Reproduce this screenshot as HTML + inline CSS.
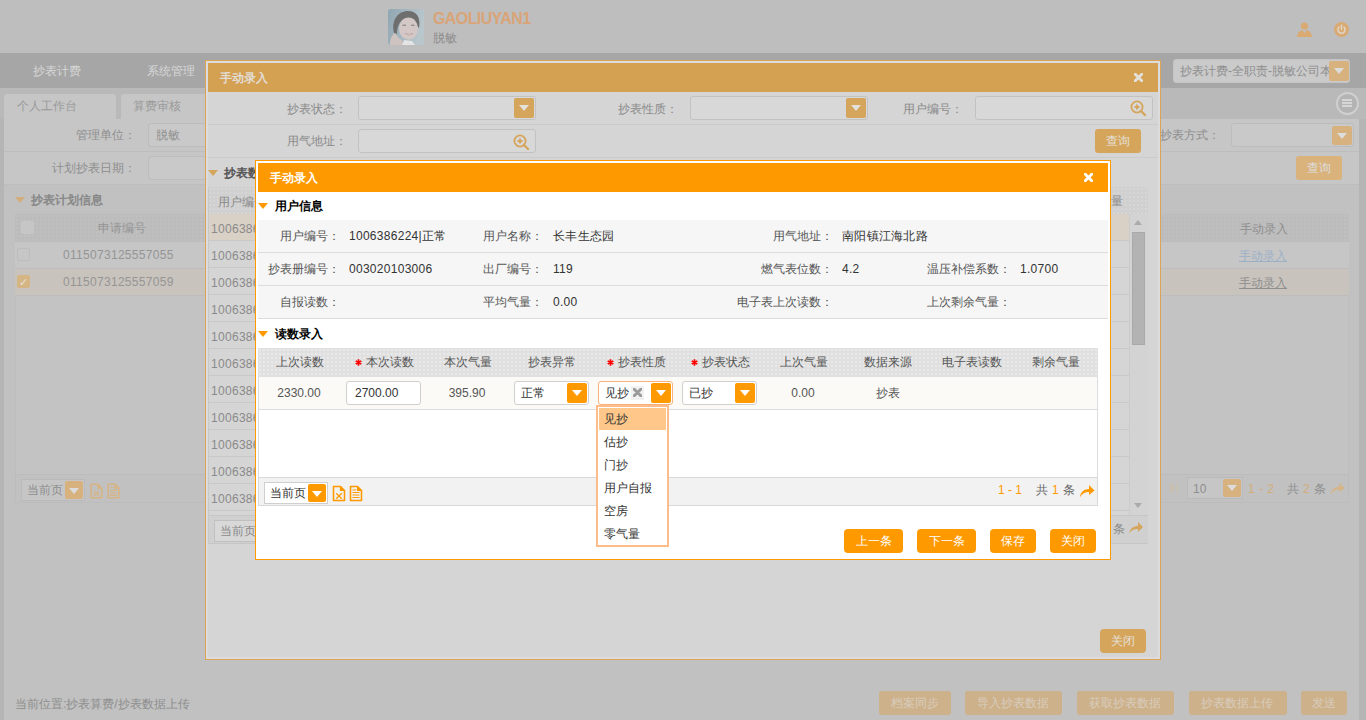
<!DOCTYPE html>
<html><head><meta charset="utf-8">
<style>
*{box-sizing:border-box;margin:0;padding:0}
html,body{width:1366px;height:720px;overflow:hidden}
body{position:relative;background:#bdbdbd;font-family:"Liberation Sans",sans-serif;font-size:12px;line-height:12px;color:#333}
.a{position:absolute}
.t{position:absolute;white-space:nowrap;font-size:12px;line-height:12px}
.r{text-align:right}
.b{font-weight:bold}
.tri{position:absolute;width:0;height:0;border-left:5px solid transparent;border-right:5px solid transparent;border-top:6px solid #fff}
/* page (dimmed) */
#hdr{left:0;top:0;width:1366px;height:53px;background:#bebebe}
#nav{left:0;top:53px;width:1366px;height:35px;background:#a6a6a6}
#tabs{left:0;top:88px;width:1366px;height:31px;background:#b9b9b9}
.ptxt{color:#8e8e8e}
.dots1{background-color:#bcbcbc;background-image:radial-gradient(#c1c1c1 0.7px,transparent 0.8px);background-size:4px 4px}
.dots2{background-color:#e0e0e0;background-image:radial-gradient(#eaeaea 0.7px,transparent 0.8px);background-size:4px 4px}
.dots0{background-color:#d0d0d0;background-image:radial-gradient(#d6d6d6 0.7px,transparent 0.8px);background-size:4px 4px}
</style></head>
<body>
<!-- ================= PAGE ================= -->
<div class="a" id="hdr"></div>
<!-- avatar -->
<svg class="a" style="left:388px;top:9px" width="36" height="36" viewBox="0 0 36 36">
 <defs><clipPath id="cp"><rect x="0" y="0" width="36" height="36" rx="3"/></clipPath>
 <linearGradient id="bgg" x1="0" y1="0" x2="1" y2="0.3"><stop offset="0" stop-color="#8fa6b2"/><stop offset="1" stop-color="#b9c6cc"/></linearGradient></defs>
 <g clip-path="url(#cp)">
 <rect width="36" height="36" fill="url(#bgg)"/>
 <path d="M6 24 C3 11 10 2 20 2 C29 2 33 9 31 19 L29 17 C26 11 21 9 15 11 C11 13 9 18 9 25 Z" fill="#6f6e6e"/>
 <ellipse cx="20.5" cy="19.5" rx="9.5" ry="11" fill="#d3c8c5"/>
 <path d="M14.5 16.5 Q16.5 15.5 18 16.5" stroke="#777" stroke-width="1" fill="none"/>
 <path d="M23 16.5 Q24.5 15.5 26.5 16.5" stroke="#777" stroke-width="1" fill="none"/>
 <path d="M17 24.5 Q21 27.5 25 24.5 Q21 26 17 24.5Z" fill="#eee" stroke="#b99" stroke-width="0.6"/>
 <path d="M2 36 C2 30 4 26 7 24 C9 27 11 30 14 31 L15 36 Z" fill="#cfc3c0"/>
 <path d="M14 36 L16 31 L24 32 L27 36 Z" fill="#e4e4e4"/>
 </g>
</svg>
<div class="t b" style="left:433px;top:11px;font-size:16px;line-height:16px;color:#d9a478;letter-spacing:-0.6px">GAOLIUYAN1</div>
<div class="t" style="left:433px;top:32px;color:#8a8a8a">脱敏</div>
<!-- user icon -->
<svg class="a" style="left:1297px;top:22px" width="15" height="15" viewBox="0 0 15 15">
 <circle cx="7.5" cy="4" r="3.6" fill="#d9aa72"/>
 <path d="M0 15 C0.5 10 3 8.5 5.5 8.2 L7.5 11 L9.5 8.2 C12 8.5 14.5 10 15 15 Z" fill="#d9aa72"/>
</svg>
<!-- power icon -->
<svg class="a" style="left:1334px;top:22px" width="15" height="15" viewBox="0 0 15 15">
 <circle cx="7.5" cy="7.5" r="7.5" fill="#d9aa72"/>
 <path d="M5 5 A3.6 3.6 0 1 0 10 5" stroke="#e0d6c8" stroke-width="1.5" fill="none" stroke-linecap="round"/>
 <line x1="7.5" y1="3.2" x2="7.5" y2="7.5" stroke="#e0d6c8" stroke-width="1.5" stroke-linecap="round"/>
</svg>

<div class="a" id="nav"></div>
<div class="t" style="left:33px;top:65px;color:#d6d6d6">抄表计费</div>
<div class="t" style="left:147px;top:65px;color:#d6d6d6">系统管理</div>
<!-- role select -->
<div class="a" style="left:1173px;top:59px;width:177px;height:24px;background:#cacaca;border:1px solid #c4c4c4;border-radius:3px"></div>
<div class="t" style="left:1180px;top:65px;color:#8e8e8e;width:149px;overflow:hidden">抄表计费-全职责-脱敏公司本部</div>
<div class="a" style="left:1329px;top:61px;width:20px;height:20px;background:#d7b27e;border-radius:2px"></div>
<div class="tri" style="left:1334px;top:68px;border-top-color:#dcdcdc"></div>

<div class="a" id="tabs"></div>
<div class="a" style="left:4px;top:94px;width:112px;height:25px;background:#c6c6c6;border-radius:3px 3px 0 0"></div>
<div class="t" style="left:17px;top:100px;color:#9a9a9a">个人工作台</div>
<div class="a" style="left:121px;top:94px;width:120px;height:25px;background:#c6c6c6;border-radius:3px 3px 0 0"></div>
<div class="t" style="left:133px;top:100px;color:#9a9a9a">算费审核</div>
<!-- menu circle -->
<div class="a" style="left:1336px;top:92px;width:23px;height:23px;border-radius:50%;border:2px solid #cfcfcf;background:#b4b4b4"></div>
<div class="a" style="left:1342px;top:99px;width:10px;height:2px;background:#d6d6d6;box-shadow:0 3px 0 #d6d6d6,0 6px 0 #d6d6d6"></div>

<!-- left & right strips -->
<div class="a" style="left:0;top:119px;width:4px;height:601px;background:#b5b5b5"></div>
<div class="a" style="left:1359px;top:119px;width:7px;height:601px;background:#b5b5b5"></div>
<!-- form panel -->
<div class="a" style="left:4px;top:119px;width:1355px;height:601px;background:#c1c1c1"></div>
<div class="a" style="left:4px;top:119px;width:1355px;height:65px;background:#c6c6c6"></div>
<div class="a" style="left:4px;top:151px;width:1355px;height:1px;background:#bdbdbd"></div>
<div class="a" style="left:4px;top:184px;width:1355px;height:1px;background:#bdbdbd"></div>
<div class="t r" style="left:24px;width:112px;top:129px;color:#8e8e8e">管理单位：</div>
<div class="a" style="left:148px;top:123px;width:120px;height:24px;background:#c9c9c9;border:1px solid #bcbcbc;border-radius:3px"></div>
<div class="t" style="left:156px;top:129px;color:#8e8e8e">脱敏</div>
<div class="t r" style="left:24px;width:112px;top:162px;color:#8e8e8e">计划抄表日期：</div>
<div class="a" style="left:148px;top:156px;width:120px;height:24px;background:#c9c9c9;border:1px solid #bcbcbc;border-radius:3px"></div>
<div class="t r" style="left:1104px;width:116px;top:129px;color:#8e8e8e">抄表方式：</div>
<div class="a" style="left:1231px;top:123px;width:123px;height:24px;background:#c9c9c9;border:1px solid #bcbcbc;border-radius:3px"></div>
<div class="a" style="left:1332px;top:126px;width:20px;height:19px;background:#d7b27e;border-radius:2px"></div>
<div class="tri" style="left:1337px;top:133px;border-top-color:#dcdcdc"></div>
<div class="a" style="left:1296px;top:156px;width:46px;height:24px;background:#d9b27c;border-radius:3px"></div>
<div class="t" style="left:1307px;top:162px;color:#dedede">查询</div>

<!-- plan info -->
<div class="tri" style="left:15px;top:197px;border-top-color:#d3ad7a"></div>
<div class="t b" style="left:31px;top:194px;color:#888">抄表计划信息</div>
<div class="a" style="left:15px;top:214px;width:1334px;height:288px;border:1px solid #bebebe;background:#c3c3c3"></div>
<div class="a dots1" style="left:15px;top:214px;width:1334px;height:28px"></div>
<div class="a" style="left:15px;top:242px;width:1334px;height:27px;background:#c6c6c6;border-bottom:1px solid #bdbdbd"></div>
<div class="a" style="left:15px;top:269px;width:1334px;height:27px;background:#c9c3bd;border-bottom:1px solid #bdbdbd"></div>
<div class="a" style="left:21px;top:221px;width:13px;height:13px;border:1px solid #c8c8c8;border-radius:2px;background:#c6c6c6"></div>
<div class="t" style="left:98px;top:222px;color:#959595">申请编号</div>
<div class="a" style="left:17px;top:248px;width:13px;height:13px;border:1px solid #bdbdbd;border-radius:2px;background:#c6c6c6"></div>
<div class="t" style="left:63px;top:249px;color:#959595;letter-spacing:0.3px">0115073125557055</div>
<div class="a" style="left:17px;top:275px;width:13px;height:13px;border-radius:2px;background:#d6b585"></div>
<div class="t" style="left:19px;top:276px;color:#e6e0d6;font-size:11px">✓</div>
<div class="t" style="left:63px;top:276px;color:#959595;letter-spacing:0.3px">0115073125557059</div>
<div class="t" style="left:1240px;top:223px;color:#8e8e8e">手动录入</div>
<div class="t" style="left:1239px;top:250px;color:#9cb0c8;text-decoration:underline">手动录入</div>
<div class="t" style="left:1239px;top:277px;color:#8e8e8e;text-decoration:underline">手动录入</div>
<!-- pager bg -->
<div class="a" style="left:15px;top:474px;width:1334px;height:29px;background:#c1c1c1;border:1px solid #bcbcbc"></div>
<div class="a" style="left:21px;top:479px;width:64px;height:22px;border:1px solid #bababa;background:#c6c6c6"></div>
<div class="t" style="left:27px;top:484px;color:#8e8e8e">当前页</div>
<div class="a" style="left:65px;top:481px;width:18px;height:18px;background:#d7b27e;border-radius:2px"></div>
<div class="tri" style="left:69px;top:488px;border-top-color:#dcdcdc"></div>
<svg class="a" style="left:90px;top:483px" width="13" height="16" viewBox="0 0 13 16"><path d="M1.2 1.2H7.8L11.8 5.2V14.8H1.2Z" fill="none" stroke="#d6b485" stroke-width="1.6" stroke-linejoin="round"/><path d="M7.8 1.2V5.2H11.8Z" fill="#d6b485" stroke="#d6b485" stroke-width="1.2" stroke-linejoin="round"/><path d="M3.8 7.6L9.2 13M9.2 7.6L3.8 13" stroke="#d6b485" stroke-width="1.3"/></svg>
<svg class="a" style="left:107px;top:483px" width="13" height="16" viewBox="0 0 13 16"><path d="M1.2 1.2H7.8L11.8 5.2V14.8H1.2Z" fill="none" stroke="#d6b485" stroke-width="1.6" stroke-linejoin="round"/><path d="M7.8 1.2V5.2H11.8Z" fill="#d6b485" stroke="#d6b485" stroke-width="1.2" stroke-linejoin="round"/><path d="M3.2 4.5H6.5M3.2 7.3H9.8M3.2 9.8H9.8M3.2 12.3H9.8" stroke="#d6b485" stroke-width="1.2"/></svg>
<svg class="a" style="left:1170px;top:482px" width="8" height="12" viewBox="0 0 8 12"><path d="M0 0L5.5 6L0 12Z" fill="#c9bfb0"/><rect x="6.5" y="0" width="1.5" height="12" fill="#c9bfb0"/></svg>
<div class="a" style="left:1187px;top:477px;width:56px;height:22px;border:1px solid #bababa;background:#c6c6c6"></div>
<div class="t" style="left:1193px;top:483px;color:#8e8e8e">10</div>
<div class="a" style="left:1223px;top:479px;width:18px;height:18px;background:#d7b27e;border-radius:2px"></div>
<div class="tri" style="left:1227px;top:485px;border-top-color:#dcdcdc"></div>
<div class="t" style="left:1248px;top:483px;color:#d3ad7a;letter-spacing:0.5px">1 - 2</div>
<div class="t" style="left:1287px;top:483px;color:#8e8e8e">共</div>
<div class="t" style="left:1303px;top:483px;color:#d3ad7a">2</div>
<div class="t" style="left:1314px;top:483px;color:#8e8e8e">条</div>
<svg class="a" style="left:1330px;top:482px" width="15" height="13" viewBox="0 0 16 14"><path d="M1 13.5 C1.5 8 5 5 10 5 L10 1 L15.5 6.5 L10 11 L10 8 C6 8 3 9.5 1 13.5Z" fill="#d6b485"/></svg>

<!-- status + bottom buttons -->
<div class="t" style="left:15px;top:698px;color:#8e8e8e">当前位置:抄表算费/抄表数据上传</div>
<div class="a" style="left:879px;top:691px;width:72px;height:24px;background:#cdb18a;border-radius:3px"></div>
<div class="t" style="left:891px;top:697px;color:#d8ccbd">档案同步</div>
<div class="a" style="left:965px;top:691px;width:97px;height:24px;background:#cdb18a;border-radius:3px"></div>
<div class="t" style="left:977px;top:697px;color:#d8ccbd">导入抄表数据</div>
<div class="a" style="left:1077px;top:691px;width:97px;height:24px;background:#cdb18a;border-radius:3px"></div>
<div class="t" style="left:1089px;top:697px;color:#d8ccbd">获取抄表数据</div>
<div class="a" style="left:1189px;top:691px;width:98px;height:24px;background:#cdb18a;border-radius:3px"></div>
<div class="t" style="left:1201px;top:697px;color:#d8ccbd">抄表数据上传</div>
<div class="a" style="left:1301px;top:691px;width:46px;height:24px;background:#cdb18a;border-radius:3px"></div>
<div class="t" style="left:1312px;top:697px;color:#d8ccbd">发送</div>

<!-- DIALOG1 placeholder -->

<div class="a" style="left:205px;top:60px;width:956px;height:600px;border:1px solid #dca456;background:#d5d5d5;box-shadow:inset 0 0 0 2px #dcdcde"></div>
<div class="a" style="left:208px;top:63px;width:950px;height:29px;background:#d4a052"></div>
<div class="t b" style="left:220px;top:72px;color:#e2dcd4">手动录入</div>
<svg class="a" style="left:1134px;top:73px" width="9" height="9" viewBox="0 0 9 9"><path d="M1.3 1.3L7.7 7.7M7.7 1.3L1.3 7.7" stroke="#e4e0da" stroke-width="2.9" stroke-linecap="square"/></svg>
<!-- form -->
<div class="a" style="left:208px;top:124px;width:950px;height:1px;background:#cbcbcb"></div>
<div class="a" style="left:208px;top:157px;width:950px;height:1px;background:#cbcbcb"></div>
<div class="t r" style="left:254px;width:93px;top:103px;color:#8a8a8a">抄表状态：</div>
<div class="a" style="left:358px;top:96px;width:178px;height:24px;background:#d8d8d8;border:1px solid #c2c2c2;border-radius:3px"></div>
<div class="a" style="left:514px;top:98px;width:20px;height:20px;background:#d6a55c;border-radius:2px"></div>
<div class="tri" style="left:519px;top:105px;border-top-color:#e4e0da"></div>
<div class="t r" style="left:254px;width:93px;top:135px;color:#8a8a8a">用气地址：</div>
<div class="a" style="left:358px;top:129px;width:178px;height:24px;background:#d8d8d8;border:1px solid #c2c2c2;border-radius:3px"></div>
<svg class="a" style="left:513px;top:134px" width="17" height="17" viewBox="0 0 17 17"><circle cx="7" cy="7" r="5.6" stroke="#d6a55c" stroke-width="1.8" fill="none"/><path d="M4.5 7H9.5M7 4.5V9.5" stroke="#d6a55c" stroke-width="1.8"/><path d="M11 11L15 15" stroke="#d6a55c" stroke-width="2.4" stroke-linecap="round"/></svg>
<div class="t r" style="left:583px;width:95px;top:103px;color:#8a8a8a">抄表性质：</div>
<div class="a" style="left:690px;top:96px;width:178px;height:24px;background:#d8d8d8;border:1px solid #c2c2c2;border-radius:3px"></div>
<div class="a" style="left:846px;top:98px;width:20px;height:20px;background:#d6a55c;border-radius:2px"></div>
<div class="tri" style="left:851px;top:105px;border-top-color:#e4e0da"></div>
<div class="t r" style="left:863px;width:100px;top:103px;color:#8a8a8a">用户编号：</div>
<div class="a" style="left:975px;top:96px;width:178px;height:24px;background:#d8d8d8;border:1px solid #c2c2c2;border-radius:3px"></div>
<svg class="a" style="left:1130px;top:100px" width="17" height="17" viewBox="0 0 17 17"><circle cx="7" cy="7" r="5.6" stroke="#d6a55c" stroke-width="1.8" fill="none"/><path d="M4.5 7H9.5M7 4.5V9.5" stroke="#d6a55c" stroke-width="1.8"/><path d="M11 11L15 15" stroke="#d6a55c" stroke-width="2.4" stroke-linecap="round"/></svg>
<div class="a" style="left:1095px;top:129px;width:46px;height:24px;background:#d6a55c;border-radius:3px"></div>
<div class="t" style="left:1106px;top:135px;color:#e4e0da">查询</div>
<!-- section -->
<div class="tri" style="left:208px;top:170px;border-top-color:#d6a55c"></div>
<div class="t b" style="left:224px;top:167px;color:#555">抄表数据</div>
<div class="a dots0" style="left:208px;top:187px;width:940px;height:27px"></div>
<div class="a" style="left:208px;top:187px;width:1px;height:357px;background:#c8c8c8;z-index:1"></div>
<div class="t" style="left:218px;top:196px;color:#8a8a8a">用户编号</div>
<div class="t" style="left:1099px;top:195px;color:#8a8a8a">气量</div>
<div class="a" style="left:208px;top:214px;width:921px;height:27px;background:#d9d0c6;border-bottom:1px solid #c9c9c9"></div>
<div class="t" style="left:211px;top:223px;color:#8a8a8a;letter-spacing:0.3px">1006386224</div>
<div class="a" style="left:208px;top:241px;width:921px;height:27px;background:#d5d5d5;border-bottom:1px solid #c9c9c9"></div>
<div class="t" style="left:211px;top:250px;color:#8a8a8a;letter-spacing:0.3px">1006386224</div>
<div class="a" style="left:208px;top:268px;width:921px;height:27px;background:#d5d5d5;border-bottom:1px solid #c9c9c9"></div>
<div class="t" style="left:211px;top:277px;color:#8a8a8a;letter-spacing:0.3px">1006386224</div>
<div class="a" style="left:208px;top:295px;width:921px;height:27px;background:#d5d5d5;border-bottom:1px solid #c9c9c9"></div>
<div class="t" style="left:211px;top:304px;color:#8a8a8a;letter-spacing:0.3px">1006386224</div>
<div class="a" style="left:208px;top:322px;width:921px;height:27px;background:#d5d5d5;border-bottom:1px solid #c9c9c9"></div>
<div class="t" style="left:211px;top:331px;color:#8a8a8a;letter-spacing:0.3px">1006386224</div>
<div class="a" style="left:208px;top:349px;width:921px;height:27px;background:#d5d5d5;border-bottom:1px solid #c9c9c9"></div>
<div class="t" style="left:211px;top:358px;color:#8a8a8a;letter-spacing:0.3px">1006386224</div>
<div class="a" style="left:208px;top:376px;width:921px;height:27px;background:#d5d5d5;border-bottom:1px solid #c9c9c9"></div>
<div class="t" style="left:211px;top:385px;color:#8a8a8a;letter-spacing:0.3px">1006386224</div>
<div class="a" style="left:208px;top:403px;width:921px;height:27px;background:#d5d5d5;border-bottom:1px solid #c9c9c9"></div>
<div class="t" style="left:211px;top:412px;color:#8a8a8a;letter-spacing:0.3px">1006386224</div>
<div class="a" style="left:208px;top:430px;width:921px;height:27px;background:#d5d5d5;border-bottom:1px solid #c9c9c9"></div>
<div class="t" style="left:211px;top:439px;color:#8a8a8a;letter-spacing:0.3px">1006386224</div>
<div class="a" style="left:208px;top:457px;width:921px;height:27px;background:#d5d5d5;border-bottom:1px solid #c9c9c9"></div>
<div class="t" style="left:211px;top:466px;color:#8a8a8a;letter-spacing:0.3px">1006386224</div>
<div class="a" style="left:208px;top:484px;width:921px;height:27px;background:#d5d5d5;border-bottom:1px solid #c9c9c9"></div>
<div class="t" style="left:211px;top:493px;color:#8a8a8a;letter-spacing:0.3px">1006386224</div>
<!-- scrollbar -->
<div class="a" style="left:1129px;top:214px;width:19px;height:301px;background:#d3d3d3;border-left:1px solid #cbcbcb"></div>
<div class="tri" style="left:1134px;top:220px;border-top:none;border-bottom:5px solid #ababab;border-left-width:4px;border-right-width:4px"></div>
<div class="a" style="left:1132px;top:232px;width:13px;height:113px;background:#b3b3b3;border:1px solid #a9a9a9"></div>
<div class="tri" style="left:1134px;top:503px;border-top:5px solid #ababab;border-left-width:4px;border-right-width:4px"></div>
<!-- pager -->
<div class="a" style="left:208px;top:515px;width:940px;height:29px;background:#d0d0d0;border-top:1px solid #c6c6c6;border-bottom:1px solid #c6c6c6"></div>
<div class="a" style="left:214px;top:520px;width:64px;height:22px;border:1px solid #c0c0c0;background:#d8d8d8"></div>
<div class="t" style="left:220px;top:525px;color:#8a8a8a">当前页</div>
<div class="t" style="left:1113px;top:523px;color:#8a8a8a">条</div>
<svg class="a" style="left:1128px;top:521px" width="16" height="14" viewBox="0 0 16 14"><path d="M1 13 C2 7 6 5 10 5 L10 1 L15 6 L10 11 L10 8 C6 8 3 9 1 13Z" fill="#d6a55c"/></svg>
<!-- close -->
<div class="a" style="left:1100px;top:629px;width:46px;height:24px;background:#d6a55c;border-radius:4px"></div>
<div class="t" style="left:1111px;top:635px;color:#e4e0da">关闭</div>

<!-- DIALOG2 placeholder -->

<div class="a" style="left:255px;top:160px;width:856px;height:400px;border:1px solid #ff9900;background:#fff"></div>
<div class="a" style="left:258px;top:163px;width:850px;height:29px;background:#ff9900"></div>
<div class="t b" style="left:270px;top:172px;color:#fff">手动录入</div>
<svg class="a" style="left:1084px;top:173px" width="9" height="9" viewBox="0 0 9 9"><path d="M1.3 1.3L7.7 7.7M7.7 1.3L1.3 7.7" stroke="#fff" stroke-width="2.9" stroke-linecap="square"/></svg>
<div class="tri" style="left:258px;top:203px;border-top-color:#ff9900"></div>
<div class="t b" style="left:275px;top:200px;color:#000">用户信息</div>
<div class="a" style="left:258px;top:220px;width:850px;height:99px;background:#f6f6f6"></div>
<div class="a" style="left:258px;top:252px;width:850px;height:1px;background:#dcdcdc"></div>
<div class="a" style="left:258px;top:285px;width:850px;height:1px;background:#dcdcdc"></div>
<div class="a" style="left:258px;top:318px;width:850px;height:1px;background:#dcdcdc"></div>
<div class="t r" style="left:190px;width:150px;top:230px;color:#555">用户编号：</div>
<div class="t" style="left:349px;top:230px;color:#333;letter-spacing:0.28px;">1006386224|正常</div>
<div class="t r" style="left:393px;width:150px;top:230px;color:#555">用户名称：</div>
<div class="t" style="left:553px;top:230px;color:#333;letter-spacing:0.28px;">长丰生态园</div>
<div class="t r" style="left:683px;width:150px;top:230px;color:#555">用气地址：</div>
<div class="t" style="left:842px;top:230px;color:#333;letter-spacing:0.28px;">南阳镇江海北路</div>
<div class="t r" style="left:190px;width:150px;top:263px;color:#555">抄表册编号：</div>
<div class="t" style="left:349px;top:263px;color:#333;letter-spacing:0.28px;">003020103006</div>
<div class="t r" style="left:393px;width:150px;top:263px;color:#555">出厂编号：</div>
<div class="t" style="left:553px;top:263px;color:#333;letter-spacing:0.28px;">119</div>
<div class="t r" style="left:683px;width:150px;top:263px;color:#555">燃气表位数：</div>
<div class="t" style="left:842px;top:263px;color:#333;letter-spacing:0.28px;">4.2</div>
<div class="t r" style="left:861px;width:150px;top:263px;color:#555">温压补偿系数：</div>
<div class="t" style="left:1020px;top:263px;color:#333;letter-spacing:0.28px;">1.0700</div>
<div class="t r" style="left:190px;width:150px;top:296px;color:#555">自报读数：</div>
<div class="t r" style="left:393px;width:150px;top:296px;color:#555">平均气量：</div>
<div class="t" style="left:553px;top:296px;color:#333;letter-spacing:0.28px;">0.00</div>
<div class="t r" style="left:683px;width:150px;top:296px;color:#555">电子表上次读数：</div>
<div class="t r" style="left:861px;width:150px;top:296px;color:#555">上次剩余气量：</div>
<div class="tri" style="left:258px;top:331px;border-top-color:#ff9900"></div>
<div class="t b" style="left:275px;top:328px;color:#000">读数录入</div>
<!-- grid -->
<div class="a" style="left:258px;top:348px;width:840px;height:157px;border:1px solid #dcdcdc;border-top:none;background:#fff"></div>
<div class="a dots2" style="left:258px;top:348px;width:840px;height:29px"></div>
<div class="t" style="left:258px;width:84px;top:356px;text-align:center;color:#555">上次读数</div>
<div class="t" style="left:342px;width:84px;top:356px;text-align:center;color:#555"><svg width="7" height="7" viewBox="0 0 7 7" style="vertical-align:0px;margin-right:4px"><path d="M3.5 0.3V6.7M0.7 1.9L6.3 5.1M0.7 5.1L6.3 1.9" stroke="#f00" stroke-width="1.7"/></svg>本次读数</div>
<div class="t" style="left:426px;width:84px;top:356px;text-align:center;color:#555">本次气量</div>
<div class="t" style="left:510px;width:84px;top:356px;text-align:center;color:#555">抄表异常</div>
<div class="t" style="left:594px;width:84px;top:356px;text-align:center;color:#555"><svg width="7" height="7" viewBox="0 0 7 7" style="vertical-align:0px;margin-right:4px"><path d="M3.5 0.3V6.7M0.7 1.9L6.3 5.1M0.7 5.1L6.3 1.9" stroke="#f00" stroke-width="1.7"/></svg>抄表性质</div>
<div class="t" style="left:678px;width:84px;top:356px;text-align:center;color:#555"><svg width="7" height="7" viewBox="0 0 7 7" style="vertical-align:0px;margin-right:4px"><path d="M3.5 0.3V6.7M0.7 1.9L6.3 5.1M0.7 5.1L6.3 1.9" stroke="#f00" stroke-width="1.7"/></svg>抄表状态</div>
<div class="t" style="left:762px;width:84px;top:356px;text-align:center;color:#555">上次气量</div>
<div class="t" style="left:846px;width:84px;top:356px;text-align:center;color:#555">数据来源</div>
<div class="t" style="left:930px;width:84px;top:356px;text-align:center;color:#555">电子表读数</div>
<div class="t" style="left:1014px;width:84px;top:356px;text-align:center;color:#555">剩余气量</div>
<div class="a" style="left:258px;top:377px;width:840px;height:33px;background:#fbfaf7;border-bottom:1px solid #dcdcdc;border-left:1px solid #dcdcdc;border-right:1px solid #dcdcdc"></div>
<div class="t" style="left:257px;width:84px;top:387px;text-align:center;color:#555">2330.00</div>
<div class="a" style="left:346px;top:381px;width:75px;height:24px;background:#fff;border:1px solid #cfcfcf;border-radius:3px"></div>
<div class="t" style="left:355px;top:387px;color:#333">2700.00</div>
<div class="t" style="left:425px;width:84px;top:387px;text-align:center;color:#555">395.90</div>
<div class="a" style="left:514px;top:381px;width:75px;height:24px;background:#fff;border:1px solid #cfcfcf;border-radius:3px"></div><div class="t" style="left:521px;top:387px;color:#333">正常</div><div class="a" style="left:567px;top:383px;width:20px;height:20px;background:#ff9900;border-radius:2px"></div><div class="tri" style="left:572px;top:390px;border-top-color:#fff"></div>
<div class="a" style="left:598px;top:381px;width:75px;height:24px;background:#fff;border:1px solid #f9b27c;border-radius:3px"></div><div class="t" style="left:605px;top:387px;color:#333">见抄</div><div class="a" style="left:631px;top:386px;width:13px;height:14px;background:#f1f1f1"></div><svg class="a" style="left:633px;top:388px" width="9" height="9" viewBox="0 0 9 9"><path d="M1.2 1.2L7.8 7.8M7.8 1.2L1.2 7.8" stroke="#9a9a9a" stroke-width="3" stroke-linecap="round"/></svg><div class="a" style="left:651px;top:383px;width:20px;height:20px;background:#ff9900;border-radius:2px"></div><div class="tri" style="left:656px;top:390px;border-top-color:#fff"></div>
<div class="a" style="left:682px;top:381px;width:75px;height:24px;background:#fff;border:1px solid #cfcfcf;border-radius:3px"></div><div class="t" style="left:689px;top:387px;color:#333">已抄</div><div class="a" style="left:735px;top:383px;width:20px;height:20px;background:#ff9900;border-radius:2px"></div><div class="tri" style="left:740px;top:390px;border-top-color:#fff"></div>
<div class="t" style="left:761px;width:84px;top:387px;text-align:center;color:#555">0.00</div>
<div class="t" style="left:846px;width:84px;top:387px;text-align:center;color:#555">抄表</div>
<!-- pager -->
<div class="a" style="left:258px;top:477px;width:840px;height:29px;background:#f2f2f2;border:1px solid #d8d8d8"></div>
<div class="a" style="left:264px;top:482px;width:64px;height:22px;border:1px solid #cfcfcf;background:#fff"></div>
<div class="t" style="left:270px;top:487px;color:#333">当前页</div>
<div class="a" style="left:308px;top:484px;width:18px;height:18px;background:#ff9900;border-radius:2px"></div>
<div class="tri" style="left:312px;top:491px;border-top-color:#fff"></div>
<svg class="a" style="left:332px;top:485px" width="14" height="17" viewBox="0 0 14 17"><path d="M1.5 1.5H8.5L12.5 5.5V15.5H1.5Z" fill="none" stroke="#ff9900" stroke-width="1.6" stroke-linejoin="round"/><path d="M8.5 1.5V5.5H12.5" fill="#ff9900" stroke="#ff9900" stroke-width="1.2"/><path d="M4.2 8.2L9.8 13.8M9.8 8.2L4.2 13.8" stroke="#ff9900" stroke-width="1.3"/></svg>
<svg class="a" style="left:349px;top:485px" width="14" height="17" viewBox="0 0 14 17"><path d="M1.5 1.5H8.5L12.5 5.5V15.5H1.5Z" fill="none" stroke="#ff9900" stroke-width="1.6" stroke-linejoin="round"/><path d="M8.5 1.5V5.5H12.5" fill="#ff9900" stroke="#ff9900" stroke-width="1.2"/><path d="M3.5 5H7M3.5 7.5H10.5M3.5 10H10.5M3.5 12.5H10.5" stroke="#ff9900" stroke-width="1.2"/></svg>
<div class="t" style="left:998px;top:484px;color:#ff9900">1 - 1</div>
<div class="t" style="left:1036px;top:484px;color:#666">共</div>
<div class="t" style="left:1052px;top:484px;color:#ff9900">1</div>
<div class="t" style="left:1063px;top:484px;color:#666">条</div>
<svg class="a" style="left:1079px;top:484px" width="16" height="14" viewBox="0 0 16 14"><path d="M1 13.5 C1.5 8 5 5 10 5 L10 1 L15.5 6.5 L10 11 L10 8 C6 8 3 9.5 1 13.5Z" fill="#ff9900"/></svg>
<!-- buttons -->
<div class="a" style="left:844px;top:529px;width:59px;height:24px;background:#ff9900;border-radius:4px"></div>
<div class="t" style="left:856px;top:535px;color:#fff">上一条</div>
<div class="a" style="left:917px;top:529px;width:59px;height:24px;background:#ff9900;border-radius:4px"></div>
<div class="t" style="left:929px;top:535px;color:#fff">下一条</div>
<div class="a" style="left:990px;top:529px;width:46px;height:24px;background:#ff9900;border-radius:4px"></div>
<div class="t" style="left:1001px;top:535px;color:#fff">保存</div>
<div class="a" style="left:1050px;top:529px;width:46px;height:24px;background:#ff9900;border-radius:4px"></div>
<div class="t" style="left:1061px;top:535px;color:#fff">关闭</div>
<!-- dropdown -->
<div class="a" style="left:596px;top:405px;width:73px;height:142px;border:2px solid #fcbd8a;background:#fff"></div>
<div class="a" style="left:599px;top:408px;width:67px;height:22px;background:#ffc88a"></div>
<div class="t" style="left:604px;top:413px;color:#333">见抄</div>
<div class="t" style="left:604px;top:436px;color:#333">估抄</div>
<div class="t" style="left:604px;top:459px;color:#333">门抄</div>
<div class="t" style="left:604px;top:482px;color:#333">用户自报</div>
<div class="t" style="left:604px;top:505px;color:#333">空房</div>
<div class="t" style="left:604px;top:528px;color:#333">零气量</div>

</body></html>
